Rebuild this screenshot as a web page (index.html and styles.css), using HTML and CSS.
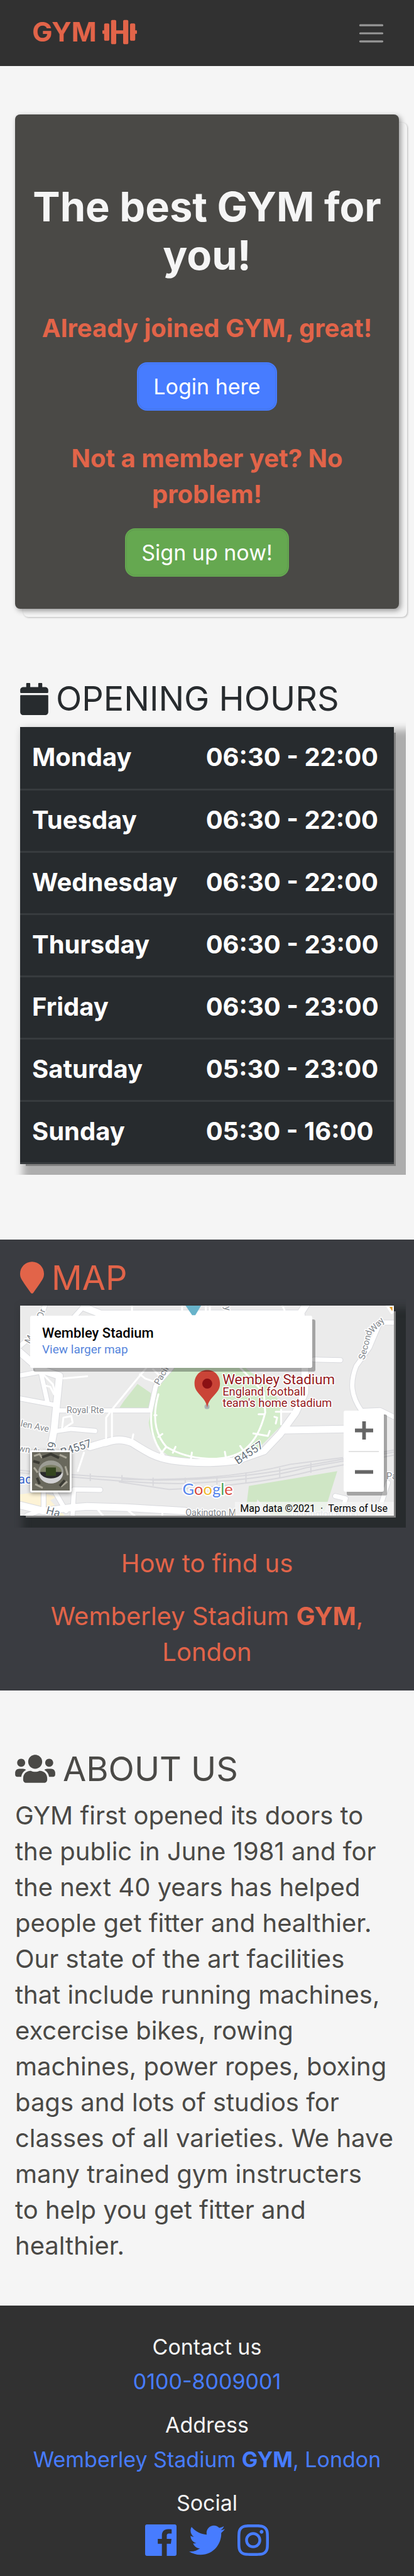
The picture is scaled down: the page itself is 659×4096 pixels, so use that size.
FILE: index.html
```html
<!DOCTYPE html>
<html lang="en">
<head>
<meta charset="utf-8">
<meta name="viewport" content="width=device-width, initial-scale=1">
<title>GYM</title>
<link rel="stylesheet" href="styles.css">
</head>
<body>
<header class="navbar">
  <a class="brand" href="#">GYM
    <svg class="brand-icon" viewBox="0 0 640 512" aria-hidden="true"><path d="M104 96H56c-13.300 0-24 10.700-24 24v104H8c-4.400 0-8 3.600-8 8v48c0 4.400 3.600 8 8 8h24v104c0 13.300 10.700 24 24 24h48c13.300 0 24-10.700 24-24V120c0-13.300-10.700-24-24-24zm528 128h-24V120c0-13.300-10.700-24-24-24h-48c-13.300 0-24 10.700-24 24v272c0 13.300 10.700 24 24 24h48c13.300 0 24-10.700 24-24V288h24c4.400 0 8-3.600 8-8v-48c0-4.400-3.600-8-8-8zM456 32h-48c-13.300 0-24 10.700-24 24v168H256V56c0-13.300-10.700-24-24-24h-48c-13.300 0-24 10.700-24 24v400c0 13.300 10.700 24 24 24h48c13.300 0 24-10.700 24-24V288h128v168c0 13.300 10.700 24 24 24h48c13.300 0 24-10.700 24-24V56c0-13.300-10.700-24-24-24z"/></svg>
  </a>
  <button class="menu-toggle" type="button" aria-label="Toggle navigation">
    <svg viewBox="0 0 30 30" aria-hidden="true"><path d="M4 7h22M4 15h22M4 23h22"/></svg>
  </button>
</header>

<main>
  <section class="hero">
    <h1>The best GYM for you!</h1>
    <h2 class="hero-sub">Already joined GYM, great!</h2>
    <button class="btn btn-login" type="button">Login here</button>
    <h2 class="hero-sub hero-sub-next">Not a member yet? No problem!</h2>
    <button class="btn btn-signup" type="button">Sign up now!</button>
  </section>

  <section class="hours">
    <h2 class="title">
      <svg class="icon icon-calendar" viewBox="0 0 448 512" aria-hidden="true"><path d="M12 192h424c6.600 0 12 5.400 12 12v260c0 26.500-21.500 48-48 48H48c-26.500 0-48-21.500-48-48V204c0-6.600 5.400-12 12-12zm436-44v-36c0-26.500-21.500-48-48-48h-48V12c0-6.600-5.400-12-12-12h-40c-6.600 0-12 5.400-12 12v52H160V12c0-6.600-5.400-12-12-12h-40c-6.600 0-12 5.400-12 12v52H48C21.500 64 0 85.500 0 112v36c0 6.600 5.400 12 12 12h424c6.600 0 12-5.400 12-12z"/></svg>
      OPENING HOURS
    </h2>
    <div class="frame">
      <table class="times">
        <tbody>
          <tr><th scope="row">Monday</th><td>06:30 - 22:00</td></tr>
          <tr><th scope="row">Tuesday</th><td>06:30 - 22:00</td></tr>
          <tr><th scope="row">Wednesday</th><td>06:30 - 22:00</td></tr>
          <tr><th scope="row">Thursday</th><td>06:30 - 23:00</td></tr>
          <tr><th scope="row">Friday</th><td>06:30 - 23:00</td></tr>
          <tr><th scope="row">Saturday</th><td>05:30 - 23:00</td></tr>
          <tr><th scope="row">Sunday</th><td>05:30 - 16:00</td></tr>
        </tbody>
      </table>
    </div>
  </section>

  <section class="location">
    <h2 class="title">
      <svg class="icon icon-marker" viewBox="0 0 384 512" aria-hidden="true"><path d="M172.300 501.700C27 291 0 269.400 0 192 0 86 86 0 192 0s192 86 192 192c0 77.400-27 99-172.300 309.700-9.500 13.800-29.900 13.800-39.400 0z"/></svg>
      MAP
    </h2>
    <div class="frame frame-dark">
      <div class="map">
        <svg class="map-canvas" viewBox="0 0 748 420" preserveAspectRatio="xMidYMid slice" role="img" aria-label="Map of the area around Wembley Stadium">
          <rect width="748" height="420" fill="#ebebeb"/>
          <g transform="scale(.528 .33333) translate(-76 -78)">
            <path fill="#fdf3d6" d="M76 1210L150 1195L215 1225L190 1245L245 1338L205 1338L130 1300L76 1270Z"/>
            <path fill="#cfe6c5" d="M521 548L572 603L565 697L450 697L470 650ZM943 1160L1278 1071L1225 1338L1030 1338L975 1240L965 1310L932 1300Z"/>
            <path fill="#d3ecca" d="M650 452H930C985 520 1055 600 1068 700L1064 800C1030 850 960 980 915 995H660C600 960 568 850 563 780L590 600C600 540 620 490 650 452Z"/>
            <g class="rail">
              <path d="M76 1065C200 1090 420 1105 585 1125C800 1125 1000 1090 1100 1055L1492 945M76 1080C300 1110 560 1150 700 1145C900 1130 1060 1095 1160 1050L1492 957M450 1135L640 1180C850 1170 1060 1120 1180 1070L1492 975M460 1120C700 1125 900 1110 1100 1030L1300 990"/>
              <path d="M342 1085v45M462 1095v45M580 1110v50M702 1110v50M822 1100v50M932 1085v60M1060 1050v60M1178 1020v60"/>
            </g>
            <g class="road-edge">
              <path class="w-l" d="M76 1275L165 1310L270 1290L330 1282L480 1290L700 1310M70 350L150 460L225 500L205 820L190 950M400 900C440 875 470 880 500 900C560 960 590 990 650 1005C760 1030 840 1020 910 1005M340 925L400 897M1165 60L1140 120L1155 250V600L1120 720L1060 850L1000 950L900 1005M1080 825L1310 818M380 128L1140 126M318 88L385 130"/>
              <path class="w-m" d="M76 320L130 250L170 78M320 78L250 200M1492 180H1440L1400 330L1350 440C1325 540 1330 620 1370 710L1440 705L1492 745M76 635L210 675M220 707H570L590 560L650 450M76 497L150 475M155 480L180 660M1290 405L1190 402M215 830L270 817L360 830M275 1338L280 1180L380 1183M165 1200V1300L100 1338M250 1310L210 1200M1270 1220L1310 1235L1290 1338M1470 1140L1430 1338"/>
            </g>
            <g class="road">
              <path class="w-l" d="M76 1275L165 1310L270 1290L330 1282L480 1290L700 1310M70 350L150 460L225 500L205 820L190 950M400 900C440 875 470 880 500 900C560 960 590 990 650 1005C760 1030 840 1020 910 1005M340 925L400 897M1165 60L1140 120L1155 250V600L1120 720L1060 850L1000 950L900 1005M1080 825L1310 818M380 128L1140 126M318 88L385 130"/>
              <path class="w-m" d="M76 320L130 250L170 78M320 78L250 200M1492 180H1440L1400 330L1350 440C1325 540 1330 620 1370 710L1440 705L1492 745M76 635L210 675M220 707H570L590 560L650 450M76 497L150 475M155 480L180 660M1290 405L1190 402M215 830L270 817L360 830M275 1338L280 1180L380 1183M165 1200V1300L100 1338M250 1310L210 1200M1270 1220L1310 1235L1290 1338M1470 1140L1430 1338"/>
              <path class="w-s" d="M555 450L420 710L402 750V880M424 710V870M590 560C565 720 560 860 620 975M600 610C570 780 600 870 630 925C720 1010 850 1020 920 950C970 890 990 810 1005 720L1000 600M630 925L610 965M665 925L655 960M727 960L723 1000M852 955L857 1000M910 920L925 955M600 865L615 848M585 735H593M980 730H1000M960 845L1015 860L1022 830M1045 715H1110M1065 700V790M1040 745L1050 750L1045 785M160 485L200 550L210 610M165 555L190 565L205 610M235 815L240 750L270 740L275 780L245 812M240 515L330 502M500 78V125M690 78V125M780 78V125M795 78V125M1070 78L1078 105M530 490L550 515L585 535M318 960L295 1070M505 850L500 890M370 1300L390 1338M480 1300L510 1338M615 1310V1338M580 460L605 500M910 450L1000 600"/>
            </g>
            <path fill="#68b3ca" d="M703 78H762L740 136H728Z"/>
            <path fill="#e09a2a" stroke="#fff" stroke-width="4" d="M1467 78H1492V112L1484 120Z"/>
          </g>
          <g class="label">
            <text transform="translate(45 26) rotate(-70)">Dr</text>
            <text transform="translate(19 77) rotate(-60)">M</text>
            <text transform="translate(409 2) rotate(85)">y</text>
            <text transform="translate(278 160) rotate(-60)">Pacific</text>
            <text transform="translate(689 109) rotate(-75)">Second</text>
            <text transform="translate(706 55) rotate(-46)">Way</text>
            <text x="93" y="215">Royal Rte</text>
            <text transform="translate(0 241) rotate(12)">len Ave</text>
            <text transform="translate(-4 291) rotate(9)">wn Ave</text>
            <text x="331" y="420">Oakington M</text>
            <text x="733" y="347">Pa</text>
            <text x="545" y="423" fill="#b5bac5">Oakington Mano</text>
          </g>
          <g class="label label-route">
            <text transform="translate(84 301) rotate(-18)">B4557</text>
            <text transform="translate(436 318) rotate(-34)">B4557</text>
            <text transform="translate(68 298) rotate(-80)">49</text>
            <text transform="translate(51 416) rotate(15)">Ha</text>
          </g>
          <text class="label station" x="-4" y="356">adi</text>
          <circle cx="374" cy="202" r="5" fill="#a9b3b5"/>
          <path fill="#ca4437" d="M374.500 204C371 181 349 177 349 156C349 120 400 120 400 156C400 177 378 181 374.500 204Z"/>
          <circle cx="374.500" cy="156" r="10" fill="#8b1014"/>
          <g class="label place">
            <text x="405" y="157" font-size="28">Wembley Stadium</text>
            <text x="405" y="180" font-size="23">England football</text>
            <text x="405" y="202" font-size="23">team's home stadium</text>
          </g>
          <text class="google" x="325" y="379"><tspan fill="#5685ec">G</tspan><tspan fill="#d9483b">o</tspan><tspan fill="#f0b92d">o</tspan><tspan fill="#5685ec">g</tspan><tspan fill="#4ba45b">l</tspan><tspan fill="#d9483b">e</tspan></text>
        </svg>
        <div class="place-card">
          <strong>Wembley Stadium</strong>
          <a href="#">View larger map</a>
        </div>
        <button class="satellite" type="button" aria-label="Show satellite imagery">
          <svg viewBox="0 0 60 60" preserveAspectRatio="none" aria-hidden="true">
            <rect width="60" height="60" fill="#69685c"/>
            <path d="M3 6l9-3 4 6M44 4l11 5M5 50l12 6M46 54l10-8M3 24l6 8M53 22l4 14" stroke="#aaa799" stroke-width="3" fill="none"/>
            <path d="M16 8l14-5 13 6M8 40l4 10M52 44l-8 9M2 14l10 3" stroke="#3b3b34" stroke-width="4" fill="none"/>
            <ellipse cx="30" cy="31" rx="20" ry="18" fill="#9c9c94"/>
            <path d="M11 33a19 16 0 0 0 38 0z" fill="#d2d2d4"/>
            <ellipse cx="30" cy="30" rx="17" ry="10" fill="#7b7e65"/>
            <path d="M13 31a17 10 0 0 0 34 0z" fill="#292a2b"/>
            <rect x="22" y="24" width="16" height="13" fill="#34451f"/>
          </svg>
        </button>
        <div class="zoom">
          <button type="button" aria-label="Zoom in"><svg viewBox="0 0 30 30" aria-hidden="true"><path d="M0 15h30M15 0v30"/></svg></button>
          <button type="button" aria-label="Zoom out"><svg viewBox="0 0 30 30" aria-hidden="true"><path d="M0 15h30"/></svg></button>
        </div>
        <div class="map-legal"><span>Map data ©2021</span><span>·</span><a href="#">Terms of Use</a></div>
      </div>
    </div>
    <p class="find">How to find us</p>
    <p class="find">Wemberley Stadium <b>GYM</b>,<br>London</p>
  </section>

  <section class="about">
    <h2 class="title">
      <svg class="icon icon-users" viewBox="0 0 640 512" aria-hidden="true"><path d="M96 224c35.300 0 64-28.700 64-64s-28.700-64-64-64-64 28.700-64 64 28.700 64 64 64zm448 0c35.300 0 64-28.700 64-64s-28.700-64-64-64-64 28.700-64 64 28.700 64 64 64zm32 32h-64c-17.600 0-33.500 7.100-45.100 18.600 40.300 22.100 68.900 62 75.100 109.400h66c17.700 0 32-14.300 32-32v-32c0-35.300-28.700-64-64-64zm-256 0c61.900 0 112-50.100 112-112S381.900 32 320 32 208 82.100 208 144s50.100 112 112 112zm76.800 32h-8.300c-20.800 10-43.900 16-68.500 16s-47.600-6-68.500-16h-8.300C179.600 288 128 339.600 128 403.200V432c0 26.500 21.500 48 48 48h288c26.500 0 48-21.500 48-48v-28.800c0-63.600-51.600-115.200-115.200-115.200zm-223.700-13.400C161.500 263.100 145.600 256 128 256H64c-35.300 0-64 28.700-64 64v32c0 17.700 14.300 32 32 32h65.900c6.300-47.400 34.900-87.300 75.200-109.400z"/></svg>
      ABOUT US
    </h2>
    <p class="story">GYM first opened its doors to<br> the public in June 1981 and for<br> the next 40 years has helped<br> people get fitter and healthier.<br> Our state of the art facilities<br> that include running machines,<br> excercise bikes, rowing<br> machines, power ropes, boxing<br> bags and lots of studios for<br> classes of all varieties. We have<br> many trained gym instructers<br> to help you get fitter and<br> healthier.</p>
  </section>
</main>

<footer class="footer">
  <div class="contact">
    <h3>Contact us</h3>
    <a href="tel:01008009001">0100-8009001</a>
  </div>
  <div class="contact">
    <h3>Address</h3>
    <a href="#">Wemberley Stadium <b>GYM</b>, London</a>
  </div>
  <div class="contact">
    <h3>Social</h3>
    <div class="social">
      <a href="#" aria-label="Facebook"><svg viewBox="0 32 448 448" width="50" height="50"><path d="M448 56.700v398.500c0 13.700-11.100 24.700-24.700 24.700H309.100V306.500h58.200l8.700-67.600h-67v-43.200c0-19.600 5.400-32.900 33.500-32.900h35.800v-60.500c-6.200-.8-27.400-2.700-52.200-2.700-51.600 0-87 31.500-87 89.400v49.900h-58.400v67.600h58.400V480H24.700C11.100 480 0 468.900 0 455.300V56.700C0 43.100 11.100 32 24.700 32h398.500c13.700 0 24.800 11.100 24.800 24.700z"/></svg></a>
      <a href="#" aria-label="Twitter"><svg viewBox="0 32 512 448" width="57" height="50"><path d="M459.370 151.716c.325 4.548.325 9.097.325 13.645 0 138.720-105.583 298.558-298.558 298.558-59.452 0-114.680-17.219-161.137-47.106 8.447.974 16.568 1.299 25.340 1.299 49.055 0 94.213-16.568 130.274-44.832-46.132-.975-84.792-31.188-98.112-72.772 6.498.974 12.995 1.624 19.818 1.624 9.421 0 18.843-1.300 27.614-3.573-48.081-9.747-84.143-51.980-84.143-102.985v-1.299c13.969 7.797 30.214 12.670 47.431 13.319-28.264-18.843-46.781-51.005-46.781-87.391 0-19.492 5.197-37.360 14.294-52.954 51.655 63.675 129.300 105.258 216.365 109.807-1.624-7.797-2.599-15.918-2.599-24.040 0-57.828 46.782-104.934 104.934-104.934 30.213 0 57.502 12.670 76.670 33.137 23.715-4.548 46.456-13.320 66.599-25.340-7.798 24.366-24.366 44.833-46.132 57.827 21.117-2.273 41.584-8.122 60.426-16.243-14.292 20.791-32.161 39.308-52.628 54.253z"/></svg></a>
      <a href="#" aria-label="Instagram"><svg viewBox="0 32 448 448" width="50" height="50"><path d="M224.100 141c-63.600 0-114.900 51.300-114.900 114.900s51.300 114.900 114.900 114.900S339 319.500 339 255.900 287.700 141 224.100 141zm0 189.600c-41.100 0-74.700-33.500-74.700-74.700s33.500-74.700 74.700-74.700 74.700 33.500 74.700 74.700-33.600 74.700-74.700 74.700zm146.400-194.300c0 14.900-12 26.800-26.800 26.800-14.900 0-26.800-12-26.800-26.800s12-26.800 26.800-26.800 26.800 12 26.800 26.800zm76.100 27.200c-1.700-35.900-9.900-67.700-36.200-93.900-26.200-26.200-58-34.400-93.900-36.200-37-2.100-147.900-2.100-184.900 0-35.800 1.700-67.600 9.900-93.900 36.100s-34.400 58-36.200 93.900c-2.100 37-2.100 147.900 0 184.900 1.700 35.900 9.900 67.700 36.200 93.900s58 34.400 93.900 36.200c37 2.100 147.900 2.100 184.900 0 35.900-1.700 67.700-9.900 93.900-36.200 26.200-26.200 34.400-58 36.200-93.900 2.100-37 2.100-147.800 0-184.800zM398.800 388c-7.800 19.600-22.900 34.700-42.600 42.600-29.500 11.700-99.500 9-132.100 9s-102.700 2.600-132.100-9c-19.600-7.800-34.700-22.900-42.600-42.600-11.700-29.500-9-99.500-9-132.100s-2.600-102.700 9-132.100c7.800-19.600 22.900-34.700 42.600-42.600 29.500-11.700 99.500-9 132.100-9s102.700-2.600 132.100 9c19.600 7.800 34.700 22.900 42.600 42.600 11.700 29.500 9 99.500 9 132.100s2.700 102.700-9 132.100z"/></svg></a>
    </div>
  </div>
</footer>
</body>
</html>
```

FILE: styles.css
```css
* { box-sizing: border-box; }
body {
  margin: 0;
  background: #f5f5f5;
  color: #4a4946;
  font-family: Inter, "Liberation Sans", sans-serif;
  font-size: 40px;
  line-height: 57px;
}
h1, h2, h3, p { margin: 0; font-weight: 400; }
a { color: #477cff; text-decoration: none; }
button { font: inherit; cursor: pointer; }

.navbar {
  display: flex;
  align-items: center;
  justify-content: space-between;
  height: 105px;
  padding: 0 44px 4px 51px;
  background: #313131;
}
.brand {
  display: flex;
  align-items: center;
  gap: 9px;
  color: #e26449;
  font-size: 43px;
  font-weight: 700;
}
.brand-icon { width: 55px; height: 44px; fill: currentColor; }
.menu-toggle { display: flex; padding: 4px 0 0; border: 0; background: none; }
.menu-toggle svg {
  width: 48px;
  height: 48px;
  fill: none;
  stroke: #979797;
  stroke-width: 2;
  stroke-linecap: round;
}

.hero {
  display: flex;
  flex-direction: column;
  align-items: center;
  margin: 77px 24px 112px;
  padding: 108px 16px 51px;
  border-radius: 8px;
  background: #4a4946;
  text-align: center;
  box-shadow: 3px 3px 8px rgba(0, 0, 0, .4), 13px 13px 0 #f5f5f5, 14px 14px 3px rgba(0, 0, 0, .25);
}
.hero h1 { color: #f5f5f5; font-size: 65px; font-weight: 700; line-height: 77px; }
.hero-sub { margin: 49px 0 26px; padding: 0 16px; color: #e26449; font-weight: 700; font-size: 40px; }
.hero-sub-next { margin: 47px 0 26px; }
.btn {
  padding: 12px 24px;
  border: 2px solid;
  border-radius: 16px;
  color: #fff;
  font-size: 34px;
  line-height: 49px;
}
.btn-login { border-color: #477cff; background: #477cff; box-shadow: inset 0 0 0 1px #4374e8; }
.btn-signup { border-color: #65a850; background: #65a850; box-shadow: inset 0 0 0 1px #5f9b4e; }

.title {
  display: flex;
  align-items: center;
  gap: 12px;
  font-size: 54px;
  line-height: 62px;
}
.icon { height: 51px; fill: currentColor; }
.icon-calendar { width: 45px; }
.icon-marker { width: 38px; }
.icon-users { width: 64px; }

.hours { padding-bottom: 103px; color: #272b2e; }
.hours .title, .location .title { padding-left: 32px; }
.frame {
  overflow: hidden;
  margin: 4px 13px 0 22px;
  padding: 10px 19px 17px 10px;
}
.times {
  width: 100%;
  border-collapse: collapse;
  background: #272b2e;
  color: #fff;
  font-weight: 700;
  box-shadow: 6px 6px 0 -3px #808080, 20px 20px 12px 16px #adadad;
}
.times tr { height: 99px; border-bottom: 3px solid #373b3e; }
.times th, .times td { padding: 0 19px 2px; text-align: left; font-weight: 700; }
.times td { padding-left: 16px; }
.times th { width: 47%; }

.location { padding: 30px 0 33px; background: #3a3c41; color: #e26449; }
.frame-dark { margin-top: 3px; padding-bottom: 19px; }
.map {
  position: relative;
  height: 334px;
  font-family: Roboto, "Liberation Sans", sans-serif;
  box-shadow: 6px 6px 0 -3px #808080, 20px 20px 12px 16px #272b2d;
}
.map-canvas { display: block; width: 100%; height: 100%; }
.map-canvas path { vector-effect: non-scaling-stroke; }
.rail path { fill: none; stroke: #d8d8dc; stroke-width: 2; }
.road path, .road-edge path { fill: none; stroke: #fff; stroke-linejoin: round; stroke-linecap: round; }
.road-edge path { stroke: #d9dade; }
.road .w-l { stroke-width: 11; }
.road .w-m { stroke-width: 7; }
.road .w-s { stroke-width: 3; }
.road-edge .w-l { stroke-width: 13; }
.road-edge .w-m { stroke-width: 9; }
.label { fill: #84888d; font-size: 18px; stroke: #fff; stroke-width: 4px; paint-order: stroke; stroke-linejoin: round; }
.label-route { fill: #66707a; font-size: 22px; }
.station { fill: #3e69cf; font-size: 26px; }
.place { fill: #94191c; }
.google { font-family: Lato, sans-serif; font-size: 32px; stroke: #fff; stroke-width: 5px; paint-order: stroke; }

.place-card {
  position: absolute;
  top: 16px;
  left: 16px;
  display: flex;
  flex-direction: column;
  width: 449px;
  max-width: 76%;
  height: 83px;
  padding: 15px 19px;
  border-radius: 3px;
  background: #fff;
  color: #000;
  font-size: 19px;
  line-height: 26px;
  box-shadow: 5px 6px 0 rgba(0, 0, 0, .3);
}
.place-card strong { font-size: 22px; font-weight: 500; }
.place-card a { color: #5685dc; }
.satellite {
  position: absolute;
  bottom: 37px;
  left: 16px;
  width: 66px;
  height: 67px;
  padding: 0;
  border: 3px solid #fff;
  border-radius: 3px;
  background: #fff;
  box-shadow: 0 2px 6px rgba(0, 0, 0, .4);
}
.satellite svg { display: block; width: 100%; height: 100%; }
.zoom {
  position: absolute;
  right: 16px;
  bottom: 38px;
  display: grid;
  grid-template-rows: 1fr 1fr;
  width: 64px;
  height: 129px;
  padding: 0 8px;
  border-radius: 3px;
  background: #fff;
  box-shadow: 5px 6px 0 rgba(0, 0, 0, .3);
}
.zoom button { display: grid; place-items: center; padding: 0; border: 0; background: none; }
.zoom button + button { border-top: 2px solid #e2e2e2; }
.zoom svg { width: 29px; height: 29px; stroke: #666; stroke-width: 6; }
.map-legal {
  position: absolute;
  right: 0;
  bottom: 0;
  display: flex;
  gap: 8px;
  padding: 0 10px 0 8px;
  background: rgba(245, 245, 245, .75);
  color: #000;
  font-size: 16px;
  line-height: 22px;
}
.map-legal a { color: inherit; }
.find { margin-top: 28px; padding: 0 24px; text-align: center; }
.find + .find { margin-top: 27px; }

.about { padding: 94px 24px 67px; }
.story { margin-top: 14px; white-space: nowrap; }

.footer {
  display: flex;
  flex-direction: column;
  gap: 21px;
  padding: 42px 24px 35px;
  background: #313131;
  color: #f5f5f5;
  font-size: 34px;
  line-height: 48px;
  text-align: center;
}
.contact { display: flex; flex-direction: column; gap: 7px; }
.contact h3 { font-size: 34px; }
.social { display: flex; justify-content: center; gap: 20px; padding-top: 3px; }
.social svg { display: block; fill: currentColor; }
```
